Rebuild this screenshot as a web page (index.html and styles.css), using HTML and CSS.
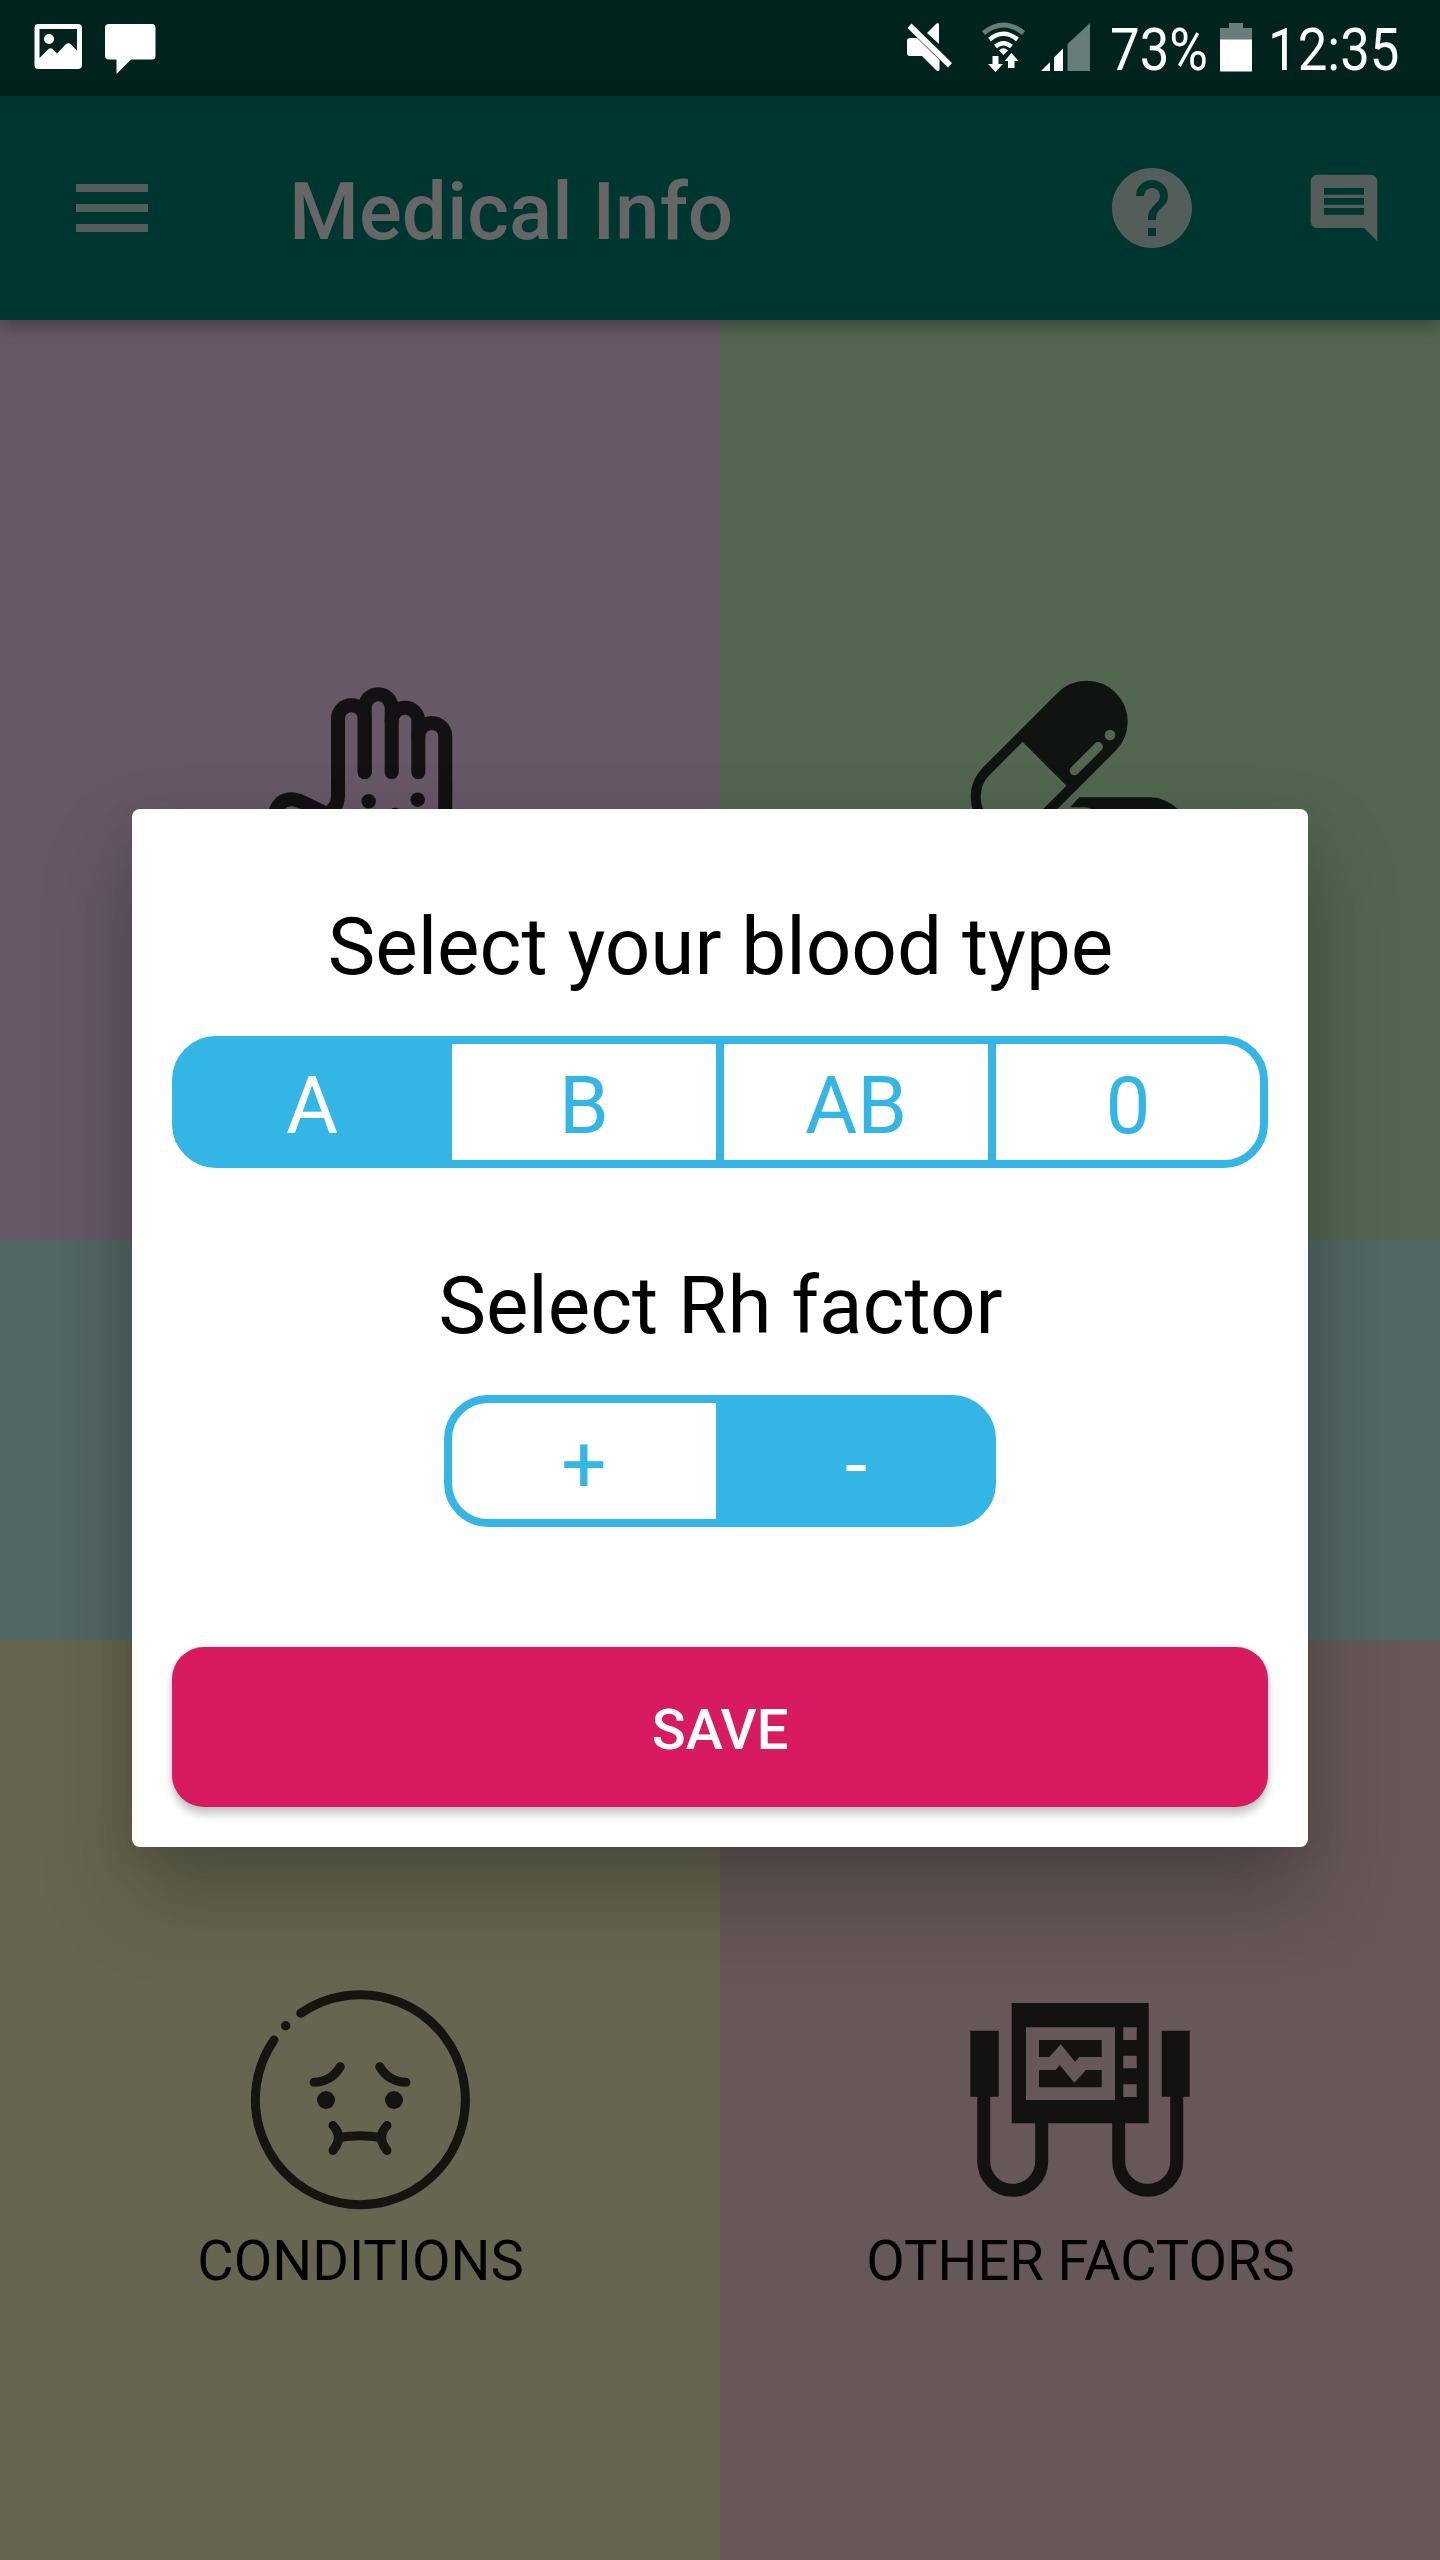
FILE: index.html
```html
<!DOCTYPE html>
<html lang="en">
<head>
<meta charset="utf-8">
<title>Medical Info</title>
<link rel="stylesheet" href="styles.css">
</head>
<body>
<div class="screen">
  <header class="status-bar">
    <svg class="status-left" width="140" height="96" viewBox="24 0 140 96" fill="#fff">
      <path fill-rule="evenodd" d="M38 24h40q4 0 4 4v37q0 4-4 4h-40q-3.500 0-3.500-4v-37q0-4 3.500-4zM39.500 29v29l9-9q2-1.500 4 0l4.500 4.500 8.500-9q3-2.500 5.500 0l6 6v-21.500z"/>
      <circle cx="49" cy="39" r="5"/>
      <path d="M109 24h43q3.500 0 3.500 4v28q0 3.500-3.500 3.500h-21l-14.500 14.500v-14.500h-7.500q-4 0-4-4v-28q0-3.500 4-3.500z"/>
    </svg>
    <svg class="status-signals" width="190" height="96" viewBox="904 0 190 96" fill="#fff">
      <path d="M907.500 28l4-4.500 40.500 39.500-4 4.500z"/>
      <path d="M927 33l9.500-9.500q2.500-1 2.500 1v19.500z"/>
      <path d="M910 38h7l22.500 22v9q0 3-3 1.500l-14.500-14.500h-12q-3 0-3-3v-12q0-3 3-3z"/>
      <g fill="none" stroke="#fff" stroke-width="4.500">
        <path d="M983.500 33q20-16 40 0" stroke="#667d79" stroke-width="5"/>
        <path d="M989.500 39.500q14-11.500 28 0M995.500 46.500q8-6.500 16 0"/>
      </g>
      <path d="M1003.500 55l-4.500-4.500q4.500-4.500 9 0zM992.500 56h6v8h4.500l-7.500 8-7.500-8h4.500zM1008 68h6.500v-7h4l-7-8-7 8h3.500z"/>
      <path d="M1041 71l9-9v9zM1054 71v-13.500l9-9v22.500z"/>
      <path fill="#667d79" d="M1067.500 71v-27l22.500-21v48z"/>
    </svg>
    <div class="status-text status-percent"><span>73%</span></div>
    <svg class="battery" width="32" height="96" viewBox="0 0 32 96">
      <path fill="#667d79" d="M9 23h14v5h9v12h-32v-12h9z"/>
      <path fill="#fff" d="M0 39.500h32v32h-32z"/>
    </svg>
    <div class="status-text status-clock"><span>12:35</span></div>
  </header>

  <nav class="app-bar">
    <svg class="menu-icon" width="72" height="48" viewBox="0 0 72 48"><path d="M0 0h72v8H0zM0 20h72v8H0zM0 40h72v8H0z"/></svg>
    <h1 class="app-title">Medical Info</h1>
    <svg class="help-icon" width="96" height="96" viewBox="0 0 24 24"><path d="M12 2C6.480 2 2 6.480 2 12s4.480 10 10 10 10-4.480 10-10S17.520 2 12 2zm1 17h-2v-2h2v2zm2.070-7.750l-.9.920C13.450 12.900 13 13.500 13 15h-2v-.5c0-1.100.45-2.100 1.170-2.830l1.240-1.260c.37-.36.590-.86.590-1.410 0-1.100-.9-2-2-2s-2 .9-2 2H8c0-2.210 1.790-4 4-4s4 1.790 4 4c0 .88-.36 1.680-.93 2.250z"/></svg>
    <svg width="80" height="80" viewBox="0 0 24 24"><path d="M21.990 4c0-1.100-.89-2-1.990-2H4c-1.100 0-2 .9-2 2v12c0 1.100.9 2 2 2h14l4 4-.01-18zM18 14H6v-2h12v2zm0-3H6V9h12v2zm0-3H6V6h12v2z"/></svg>
  </nav>

  <main class="tiles">
    <section class="tile tile-allergies">
      <svg class="tile-icon" viewBox="0 0 220 220">
        <g fill="none" stroke="currentColor" stroke-width="14" stroke-linecap="round">
          <path d="M83 139Q88 134 88 126V48.600a13.350 13.350 0 0 1 26.700 0V102.300"/>
          <path d="M114.700 102V37.800a13.500 13.500 0 0 1 27 0V102.300"/>
          <path d="M141.700 51a13.300 13.300 0 0 1 26.600 0V102.300"/>
          <path d="M168.300 66.400a13.500 13.500 0 0 1 27 0V170"/>
          <path d="M24 148C27 129 40 126 52 132L83 147"/>
        </g>
        <circle cx="118.700" cy="131.300" r="7.200"/><circle cx="167.700" cy="129.700" r="7.200"/><circle cx="145" cy="145" r="7.200"/>
      </svg>
    </section>
    <section class="tile tile-medication">
      <svg class="tile-icon" viewBox="0 0 220 220">
        <g transform="translate(41.700 126.700) rotate(-45)">
          <rect x="-36" y="-36" width="178" height="72" rx="36" fill="none" stroke="currentColor" stroke-width="10"/>
          <path d="M46.500-36H106a36 36 0 0 1 0 72H46.500z"/>
        </g>
        <path class="pill-shine" d="M104.300 100.700L128.300 76.700" stroke-linecap="round"/>
        <circle class="pill-shine-dot" cx="140" cy="65" r="5.300"/>
        <path d="M109.300 127.300H181a41 41 0 0 1 39 41H122V140q-2-2.700-6-2.700H100z"/>
      </svg>
    </section>
    <section class="tile tile-blood"></section>
    <section class="tile tile-conditions">
      <svg class="tile-icon" viewBox="0 0 220 220">
        <g fill="none" stroke="currentColor" stroke-width="9" stroke-linecap="round">
          <path d="M50.700 23.300A105 105 0 1 1 24 50"/>
          <path d="M64 92.300Q81 92 90.300 76.700M156 92.300Q139 92 129.700 76.700"/>
          <path d="M83 135.500Q94 147 83 160.500M137 135.500Q126 147 137 160.500M89 147.500Q110 144 131 147.500"/>
        </g>
        <circle cx="35.700" cy="35.700" r="4.700"/><circle cx="76" cy="110" r="9"/><circle cx="144" cy="110" r="9"/>
      </svg>
      <h2 class="tile-label">CONDITIONS</h2>
    </section>
    <section class="tile tile-factors">
      <svg class="tile-icon" viewBox="0 0 220 220">
        <path fill-rule="evenodd" d="M41.700 13H178.700V133.300H41.700zM56 37.300V110H145V37.300zM153.300 37.300V50H166.700V37.300zM153.300 65.700V78.300H166.700V65.700zM153.300 94.300V107H166.700V94.300z"/>
        <path d="M69 50H131.700V67H109.300L105 71.700 90.700 54.300 79.300 67H69zM69 80H85.700L89.700 75 104.300 92.700 116 80H131.700V97.300H69z"/>
        <path d="M.3 40.700H28.700V106.700H.3zM191.700 40.700H219.700V106.700H191.700z"/>
        <path fill="none" stroke="currentColor" stroke-width="13" d="M13.700 106V171.300a29 29 0 0 0 58 0V133M148.700 133V171.300a29 29 0 0 0 58 0V106"/>
      </svg>
      <h2 class="tile-label">OTHER FACTORS</h2>
    </section>
  </main>

  <div class="overlay">
    <div class="dialog" role="dialog">
      <p class="question">Select your blood type</p>
      <div class="segments">
        <button class="segment selected">A</button>
        <button class="segment">B</button>
        <button class="segment">AB</button>
        <button class="segment">0</button>
      </div>
      <p class="question">Select Rh factor</p>
      <div class="segments">
        <button class="segment">+</button>
        <button class="segment selected">-</button>
      </div>
      <button class="save">SAVE</button>
    </div>
  </div>
</div>
</body>
</html>
```
FILE: styles.css
```css
* { box-sizing: border-box; }

body {
  margin: 0;
  font-family: Roboto, "Liberation Sans", sans-serif;
}

h1, h2, p { margin: 0; font-weight: 400; }

svg { display: block; flex: none; }

button {
  border: 0;
  font-family: inherit;
}

.screen {
  position: relative;
  width: 1440px;
  height: 2560px;
  overflow: hidden;
  display: flex;
  flex-direction: column;
}

.status-bar {
  height: 96px;
  flex: none;
  display: flex;
  padding-left: 24px;
  background: #00231d;
}

.status-signals { margin-left: 740px; }

.status-text {
  color: #fff;
  font-size: 60px;
  line-height: 70px;
  padding-top: 15px;
  white-space: nowrap;
}

.status-text span {
  display: inline-block;
  transform-origin: 0 0;
  transform: scaleX(.88);
}

.status-percent { width: 110px; margin-left: 16px; }

.status-clock { width: 150px; margin-left: 16px; }

.app-bar {
  position: relative;
  height: 224px;
  flex: none;
  display: flex;
  align-items: center;
  padding: 0 56px 0 76px;
  background: #003630;
  box-shadow: 0 6px 16px rgba(0, 0, 0, .3);
  fill: #535d5a;
}

.app-title {
  margin-left: 141px;
  flex: 1;
  color: #666;
  font-size: 80px;
  line-height: 94px;
  font-weight: 500;
  padding-top: 7px;
}

.help-icon { margin-right: 104px; }

.tiles {
  flex: 1;
  display: grid;
  grid-template-columns: 1fr 1fr;
  grid-template-rows: 920px 400px 920px;
}

.tile {
  display: grid;
  grid-template-rows: 1fr auto 1fr;
  justify-items: center;
}

.tile-icon {
  grid-row: 2;
  width: 220px;
  height: 220px;
  fill: currentColor;
}

.tile-label {
  grid-row: 3;
  margin-top: 18px;
  padding-left: 1px;
  font-size: 56px;
  line-height: 66px;
  color: #000;
}

.tile-allergies { background: #665866; }
.tile-allergies .tile-icon { color: #141114; }
.tile-medication { background: #526650; }
.tile-medication .tile-icon { color: #101410; }
.tile-blood { grid-column: span 2; background: #526664; }
.tile-conditions { background: #666650; }
.tile-conditions .tile-icon { color: #141410; }
.tile-factors { background: #665858; }
.tile-factors .tile-icon { color: #141111; }

.pill-shine { stroke: #526650; stroke-width: 9.3px; }
.pill-shine-dot { fill: #526650; }

.overlay {
  position: absolute;
  inset: 96px 0 0;
  display: flex;
  align-items: center;
  justify-content: center;
}

.dialog {
  width: 1176px;
  padding: 91px 40px 40px;
  display: flex;
  flex-direction: column;
  align-items: center;
  background: #fff;
  border-radius: 8px;
  box-shadow: 0 48px 88px rgba(0, 0, 0, .26), 0 0 40px rgba(0, 0, 0, .06);
}

.question {
  padding-left: 1px;
  font-size: 80px;
  line-height: 94px;
  color: #000;
}

.segments {
  display: flex;
  height: 132px;
  margin: 42px 0 91px;
}

.segment {
  width: 280px;
  padding: 8px 0 0;
  border: 8px solid #33b5e5;
  background: #fff;
  color: #33b5e5;
  font-size: 80px;
  line-height: 94px;
}

.segment + .segment { margin-left: -8px; }
.segment:first-child { border-radius: 44px 0 0 44px; }
.segment:last-child { border-radius: 0 44px 44px 0; }

.segment.selected {
  background: #33b5e5;
  color: #fff;
}

.save {
  width: 100%;
  height: 160px;
  margin-top: 29px;
  padding: 6px 0 0;
  border-radius: 32px;
  background: #d81b60;
  color: #fff;
  font-size: 56px;
  line-height: 66px;
  font-weight: 500;
  box-shadow: 0 8px 8px rgba(0, 0, 0, .2), 0 0 6px rgba(0, 0, 0, .1);
}
```
